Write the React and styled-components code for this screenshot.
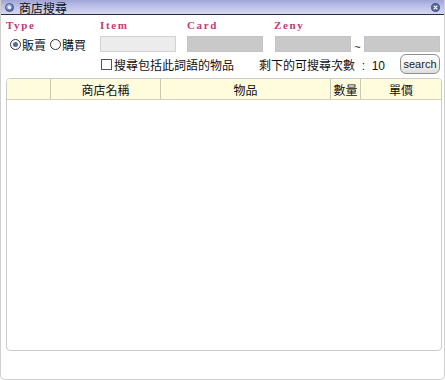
import React from 'react'
import styled, { createGlobalStyle } from 'styled-components'

const GlobalStyle = createGlobalStyle`
	html, body {
		margin: 0;
		padding: 0;
		background: #fff;
	}
	body {
		font-family: "Noto Sans CJK TC", "Liberation Sans", sans-serif;
		font-size: 12px;
		color: #111;
	}
`;

const Window = styled.div`
	box-sizing: border-box;
	width: 445px;
	height: 380px;
	border: 1px solid #cfcfcf;
	border-top: none;
	border-radius: 0 0 5px 5px;
	background: #fff;
	display: flex;
	flex-direction: column;
`;

const TitleBar = styled.div`
	height: 14px;
	display: flex;
	align-items: center;
	padding: 0 4px;
	background: linear-gradient(to bottom, #9fa5d6 0%, #b9bde6 40%, #d6d9f1 100%);
	border-bottom: 1px solid #2b2b3b;
`;

const TitleText = styled.span`
	margin-left: 5px;
	font-size: 12px;
	line-height: 13px;
	color: #111;
	flex: 1;
	white-space: nowrap;
`;

const Body = styled.div`
	flex: 1;
	display: flex;
	flex-direction: column;
	padding: 4px 4px 0 5px;
`;

const LabelRow = styled.div`
	display: grid;
	grid-template-columns: 94px 87px 87px 1fr;
	height: 13px;
`;

const Label = styled.span`
	font-family: "Liberation Serif", "DejaVu Serif", serif;
	font-weight: bold;
	font-size: 11px;
	line-height: 12px;
	letter-spacing: 1.6px;
	color: #c23a76;
`;

const InputRow = styled.div`
	display: flex;
	align-items: center;
	height: 18px;
	margin-top: 3px;
`;

const RadioGroup = styled.div`
	width: 95px;
	display: flex;
	align-items: center;
	padding-left: 4px;
	box-sizing: border-box;
`;

const Radio = styled.span`
	display: inline-flex;
	align-items: center;
	font-size: 12px;
	margin-right: 4px;
	white-space: nowrap;
`;

const RadioDot = styled.span`
	box-sizing: border-box;
	width: 11px;
	height: 11px;
	border-radius: 50%;
	border: 1px solid #333;
	background: #fff;
	display: inline-flex;
	align-items: center;
	justify-content: center;
	margin-right: 1px;
	&::after {
		content: '';
		width: 5px;
		height: 5px;
		border-radius: 50%;
		background: ${p => (p.$on ? '#4a6aa8' : 'transparent')};
	}
`;

const Field = styled.div`
	box-sizing: border-box;
	flex: none;
	width: 76px;
	height: 16px;
	background: ${p => (p.$light ? '#ececec' : '#c9c9c9')};
	border: 1px solid ${p => (p.$light ? '#d2d2d2' : '#c4c4c4')};
	margin-right: ${p => p.$gap || 0}px;
`;

const Tilde = styled.span`
	flex: none;
	width: 13px;
	text-align: center;
	font-family: "Liberation Sans", sans-serif;
	font-size: 11px;
	line-height: 11px;
	align-self: flex-end;
`;

const OptionRow = styled.div`
	display: flex;
	align-items: center;
	height: 22px;
	padding-left: 95px;
`;

const CheckBox = styled.span`
	box-sizing: border-box;
	flex: none;
	width: 11px;
	height: 11px;
	border: 1px solid #555;
	margin-right: 2px;
	background: #fff;
`;

const OptionText = styled.span`
	font-size: 12px;
	width: 145px;
	white-space: nowrap;
`;

const CountText = styled.span`
	font-size: 12px;
	flex: 1;
	white-space: nowrap;
`;

const CountNum = styled.span`
	font-family: "Liberation Sans", sans-serif;
	font-size: 12px;
	white-space: pre;
`;

const SearchButton = styled.button`
	box-sizing: border-box;
	flex: none;
	width: 40px;
	height: 20px;
	padding: 0;
	border: 1px solid #8e8e8e;
	border-radius: 6px;
	background: linear-gradient(to bottom, #ffffff 0%, #f2f2f2 60%, #dcdcdc 100%);
	font-family: "Liberation Sans", sans-serif;
	font-size: 11px;
	color: #222;
`;

const TableBox = styled.div`
	box-sizing: border-box;
	margin-top: 3px;
	height: 273px;
	width: 436px;
	border: 1px solid #cbcbcb;
	border-radius: 4px;
	overflow: hidden;
`;

const HeadRow = styled.div`
	display: grid;
	grid-template-columns: 44px 110px 170px 30px 1fr;
	height: 20px;
	background: #fffcde;
	border-bottom: 1px solid #d6d3bd;
`;

const HeadCell = styled.div`
	box-sizing: border-box;
	display: flex;
	align-items: center;
	justify-content: center;
	font-size: 12px;
	border-right: ${p => (p.$last ? 'none' : '1px solid #cbc8b0')};
`;

const CircleIcon = () => (
	<svg width="9" height="9" viewBox="0 0 9 9">
		<defs>
			<radialGradient id="ti" cx="40%" cy="35%" r="70%">
				<stop offset="0%" stopColor="#c4d2f0" />
				<stop offset="100%" stopColor="#3f5597" />
			</radialGradient>
		</defs>
		<circle cx="4.5" cy="4.5" r="4" fill="url(#ti)" stroke="#3b4c80" strokeWidth="0.8" />
		<circle cx="4.5" cy="4.5" r="1.6" fill="#f0f4ff" />
	</svg>
);

const CloseIcon = () => (
	<svg width="9" height="9" viewBox="0 0 9 9">
		<circle cx="4.5" cy="4.5" r="4.2" fill="#4e64a4" stroke="#2f3e72" strokeWidth="0.6" />
		<path d="M3 3 L6 6 M6 3 L3 6" stroke="#fff" strokeWidth="1.1" strokeLinecap="round" />
	</svg>
);

const App = () => {
	return (
		<>
			<GlobalStyle />
			<Window>
				<TitleBar>
					<CircleIcon />
					<TitleText>商店搜尋</TitleText>
					<CloseIcon />
				</TitleBar>
				<Body>
					<LabelRow>
						<Label>Type</Label>
						<Label>Item</Label>
						<Label>Card</Label>
						<Label>Zeny</Label>
					</LabelRow>
					<InputRow>
						<RadioGroup>
							<Radio><RadioDot $on />販賣</Radio>
							<Radio><RadioDot />購買</Radio>
						</RadioGroup>
						<Field $light $gap={11} />
						<Field $gap={12} />
						<Field />
						<Tilde>~</Tilde>
						<Field />
					</InputRow>
					<OptionRow>
						<CheckBox />
						<OptionText>搜尋包括此詞語的物品</OptionText>
						<CountText>剩下的可搜尋次數<CountNum>  :  10</CountNum></CountText>
						<SearchButton>search</SearchButton>
					</OptionRow>
					<TableBox>
						<HeadRow>
							<HeadCell />
							<HeadCell>商店名稱</HeadCell>
							<HeadCell>物品</HeadCell>
							<HeadCell>數量</HeadCell>
							<HeadCell $last>單價</HeadCell>
						</HeadRow>
					</TableBox>
				</Body>
			</Window>
		</>
	)
}

export default App
